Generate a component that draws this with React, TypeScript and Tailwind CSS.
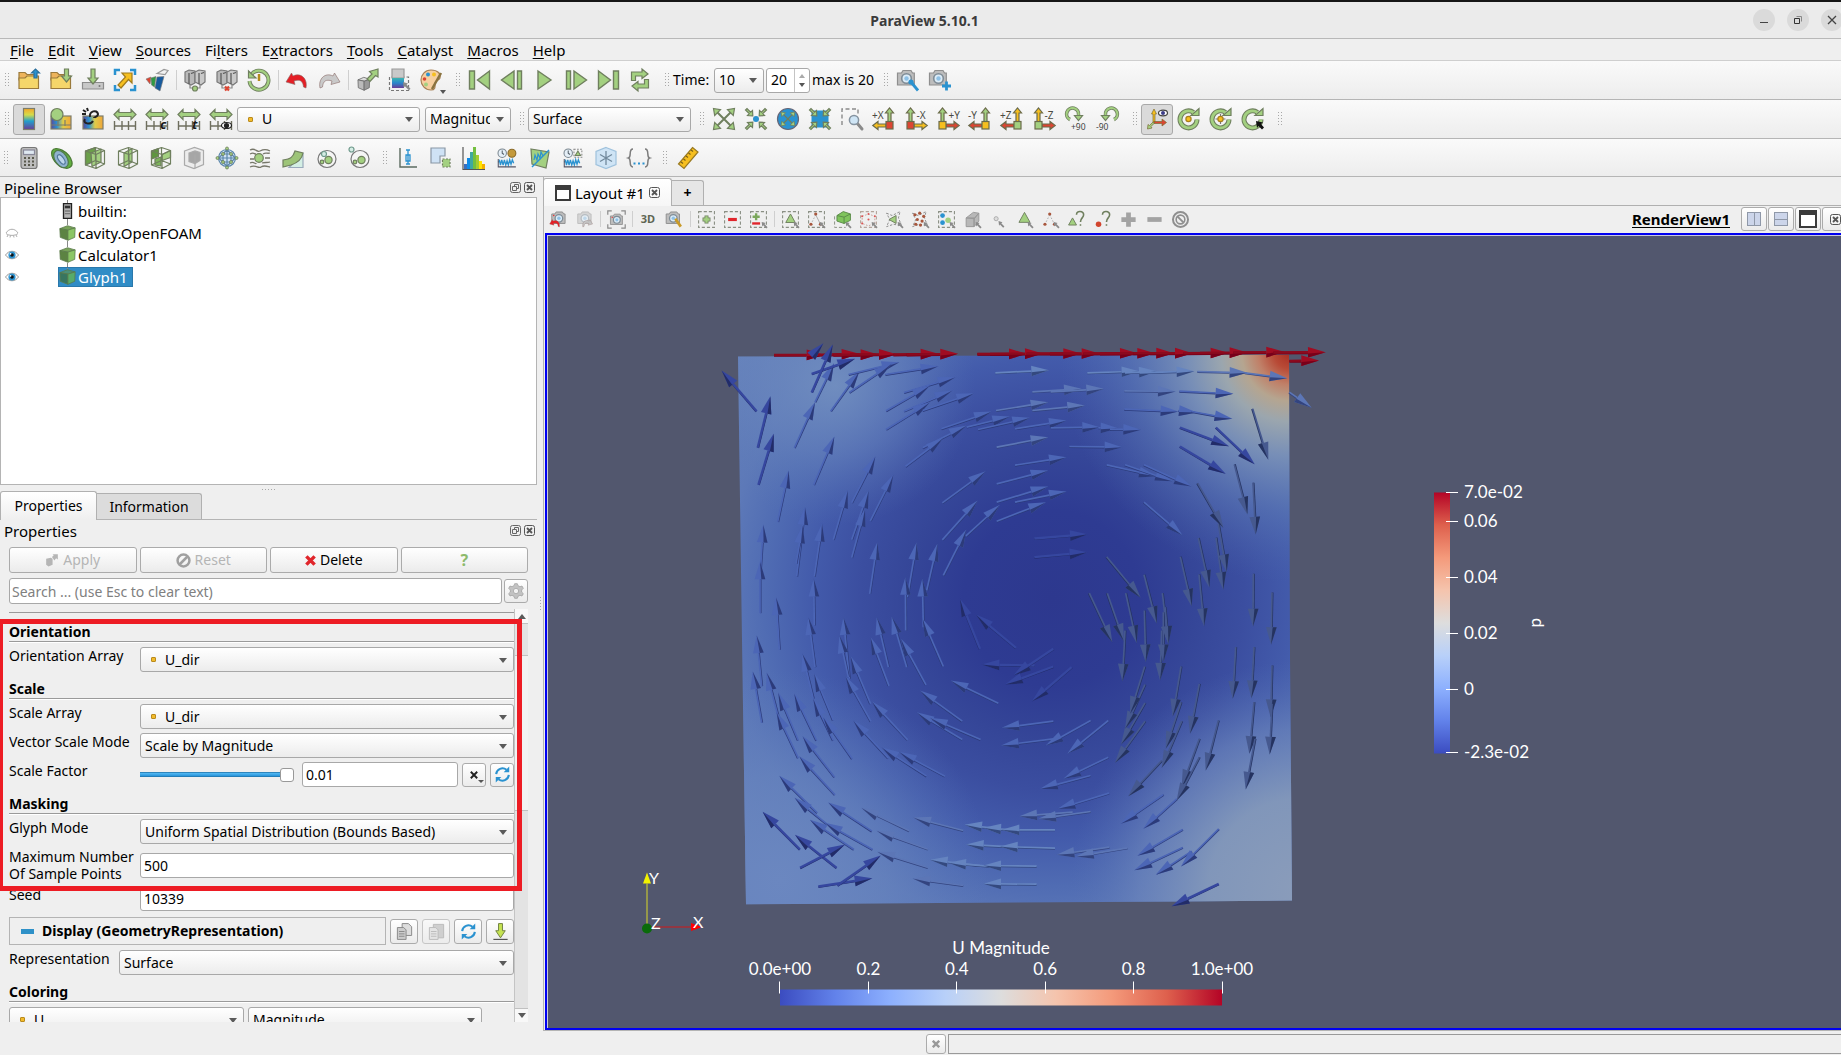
import React, { useId } from "react";

type Kids = { children?: React.ReactNode };

const G = "#a3d080";
const GS = "#6f7f5e";
const B = "#2a92d0";
const Y = "#f6bf1f";
const R = "#dc4532";

/* ---------- icon primitives ---------- */

function Ico({ s = 24, children }: Kids & { s?: 24 | 18 }) {
  return (
    <svg viewBox="0 0 24 24" className={s === 24 ? "size-6 shrink-0 overflow-visible" : "size-[19px] shrink-0"} fill="none" strokeWidth="1.2">
      {children}
    </svg>
  );
}

const Folder = ({ children }: Kids) => (
  <Ico>
    <path d="M2 7V4.500h6l2 2h9V12H2z" fill="#eeb45c" stroke="#9a7a3c" />
    <path d="M2 20.500V10h6l2-2h11.500V20.500z" fill="#f5d66a" stroke="#9a7a3c" />
    {children}
  </Ico>
);
const DownArrow = ({ x = 12, y = 2, h = 13 }: { x?: number; y?: number; h?: number }) => (
  <path d={`M${x - 2} ${y}h4v${h - 6}h3l-5 6-5-6h3z`} fill={G} stroke={GS} />
);
const Server = ({ children }: Kids) => (
  <Ico>
    <path d="M2 4l4-2 6 1v12l-4 2-6-3z" fill="#b9b9b9" stroke="#777" />
    <path d="M12 4l4-2 6 1v11l-4 3-6-3z" fill="#c9c9c9" stroke="#777" />
    <path d="M6 5v11M16 5v11M8 5.500l3-1M18 5.500l3-1" stroke="#555" />
    <path d="M7 17v3h10v-3" stroke="#888" />
    {children}
  </Ico>
);
const Cube3 = ({ front = G, top = "#c3dfaa", side = "#7da95c", stroke = GS }: { front?: string; top?: string; side?: string; stroke?: string }) => (
  <g stroke={stroke} strokeLinejoin="round">
    <path d="M3 6l9-4 9 3-8 3z" fill={top} />
    <path d="M3 6l9.500 2v14L3.500 18z" fill={side} />
    <path d="M12.500 8l8.500-3-.5 13-8 4z" fill={front} />
  </g>
);
const Camera = ({ red = false, faded = false }: { red?: boolean; faded?: boolean }) => (
  <g opacity={faded ? 0.5 : 1}>
    <path d="M1.500 5h4l1.500-2.500h8L16.500 5h1.800v12H1.500z" fill="#bdbdbd" stroke="#8e8e8e" />
    <circle cx="10.500" cy="10.500" r="4.800" fill="#dcecf7" stroke="#7f8c96" strokeWidth="1.600" />
    <circle cx="10.500" cy="10.500" r="2.200" fill="#8fc1e6" />
    {red && <circle cx="4" cy="7" r="1" fill="#e33" />}
  </g>
);
const Dashed = ({ c = "#8a8f84" }: { c?: string }) => <rect x="2" y="2" width="20" height="20" stroke={c} strokeDasharray="4 2.500" strokeWidth="1.400" />;
const Pick = ({ x = 16, y = 15 }: { x?: number; y?: number }) => (
  <path d={`M${x} ${y}l5 1.500-1.500 1.200 4 4-1.600 1.600-4-4-1.200 1.500z`} fill="#8a8a8a" />
);
const Ruler3 = () => <path d="M1.500 14v9M9 14v9M15.500 14v9M22.500 14v9M1.500 19h21" stroke="#6f6f5f" strokeWidth="1.400" />;
const HArrow = () => <path d="M1 7.500l5-5v3h12v-3l5 5-5 5v-3H6v3z" fill={G} stroke={GS} />;
const Lens = ({ x = 14, y = 13 }: { x?: number; y?: number }) => (
  <g>
    <path d={`M${x + 3} ${y + 3}l5 6`} stroke="#8a8a8a" strokeWidth="3" strokeLinecap="round" />
    <circle cx={x} cy={y} r="4.600" fill="#cfe5f5" stroke="#8593a0" strokeWidth="1.500" />
  </g>
);
const Rainbow = ({ id, x, y, w, h, v = false }: { id: string; x: number; y: number; w: number; h: number; v?: boolean }) => (
  <g>
    <linearGradient id={id} x1="0" y1="0" x2={v ? 0 : 1} y2={v ? 1 : 0}>
      <stop offset="0" stopColor={v ? "#f4a62a" : "#59489c"} />
      <stop offset=".3" stopColor={v ? "#d5dc4a" : "#2a92d0"} />
      <stop offset=".6" stopColor={v ? "#22a0cc" : "#e0cc48"} />
      <stop offset="1" stopColor={v ? "#6a3d96" : "#f0a63a"} />
    </linearGradient>
    <rect x={x} y={y} width={w} height={h} fill={`url(#${id})`} stroke="#7d7d6a" />
  </g>
);
const Axis = ({ label, flip, up, side, box }: { label: string; flip?: boolean; up: string; side: string; box: string }) => (
  <Ico>
    <g transform={flip ? "translate(24 0) scale(-1 1)" : undefined} stroke="#6b6b4a">
      <path d="M16 16V6h-2.500L17.500 1l4 5H19v10z" fill={up} />
      <path d="M14 17H6v-2.500L.8 18.500 6 22.500V20h8z" fill={side} />
      <rect x="14" y="14.500" width="7" height="7.500" fill={box} />
    </g>
    <text x={flip ? 12.500 : 0} y="12" fontSize="10" fill="#4a4a42" fontFamily="Noto Sans">
      {label}
    </text>
  </Ico>
);
const Ring = ({ children }: Kids) => (
  <Ico>
    <g transform="translate(.5 0)">
      <path d="M19.500 12.500a8.500 8.500 0 1 1-3.500-7" stroke={GS} strokeWidth="5" />
      <path d="M13.500 8.500h8V1.500z" fill={G} stroke={GS} />
      <path d="M19.500 12.500a8.500 8.500 0 1 1-3.500-7" stroke={G} strokeWidth="2.800" />
    </g>
    {children}
  </Ico>
);
const Diag = ({ inward }: { inward?: boolean }) => (
  <g fill={G} stroke={GS}>
    {!inward && <path d="M4 4l16 16M20 4L4 20" strokeWidth="2" />}
    {[0, 90, 180, 270].map((a) => (
      <path
        key={a}
        transform={`rotate(${a} 12 12)`}
        d={inward ? "M8.800 8.800L3.500 8.500 5.200 6.600 1.500 3 3 1.500 6.600 5.200 8.500 3.500z" : "M1.500 1.500l7 1.200-5.800 5.800z"}
      />
    ))}
  </g>
);
const Play = ({ flip, bar }: { flip?: boolean; bar?: "thick" | "end" }) => (
  <Ico>
    <g transform={flip ? "translate(24 0) scale(-1 1)" : undefined} fill={G} stroke={GS} strokeWidth="1.400">
      {!bar && <path d="M6 3l13 9-13 9z" />}
      {bar === "thick" && <path d="M10 3l12.500 9L10 21zM2.500 3h4v18h-4z" />}
      {bar === "end" && <path d="M2.500 3l12 9-12 9zM17.500 3h5v18h-5z" />}
    </g>
  </Ico>
);
const WireCube = ({ inner }: { inner?: React.ReactNode }) => (
  <Ico>
    <g stroke={GS} strokeLinejoin="round">
      {inner}
      <path d="M2.500 5l10-3.500 9 3-8.500 4zM2.500 5v14L13 22.500l8.500-4.500V4.500M13 8.500v14M12.500 1.500v13M2.500 19l10-4.500 9 3.500" />
    </g>
  </Ico>
);
const Clock = ({ x, y }: { x: number; y: number }) => (
  <g>
    <circle cx={x} cy={y} r="4.800" fill="#e5eff7" stroke="#7b8790" />
    <path d={`M${x} ${y - 3}v3l2 1.500`} stroke="#55606a" />
  </g>
);
const Wave = ({ y = 17 }: { y?: number }) => (
  <path d={`M2 ${y}l1.500-2 1 5 1.500-6 1.500 6 1.500-6 1.500 6 1.500-5 1.500 5 1.500-6 1.500 5 1.500-5 1.500 4`} stroke={B} strokeWidth="1.500" />
);
const Cycle = () => (
  <Ico s={18}>
    <path d="M4 11.500a8 8 0 0 1 13-5.500M20 12.500a8 8 0 0 1-13 5.500" stroke={B} strokeWidth="2.600" />
    <path d="M13.500 9h7V2zM10.500 15h-7v7z" fill={B} />
  </Ico>
);
const Redo = ({ c }: { c: string }) => (
  <path d="M3 20C1 11 8 4 16 8l1.500-3L23 14l-9 2.500 1-3.500c-6-2-9 0-9.500 6z" fill={c} stroke="#8a6a66" strokeWidth=".6" />
);

/* ---------- widgets ---------- */

function Grip({ first = false, tight = false }: { first?: boolean; tight?: boolean }) {
  return (
    <div className={`flex h-4 shrink-0 justify-end pr-[3px] ${first ? (tight ? "w-3" : "w-[13px]") : tight ? "w-4" : "w-[17px]"}`}>
      <div className="w-[6px] bg-[radial-gradient(circle,#a8a8a8_35%,transparent_40%)] bg-[length:3px_3px]" />
    </div>
  );
}
const Sep = ({ h = "h-5" }: { h?: string }) => (
  <div className="flex w-[6px] shrink-0 justify-center">
    <div className={`w-px bg-[#cfcfcf] ${h}`} />
  </div>
);
function Tool({ label, on, w = "w-8", children }: Kids & { label: string; on?: boolean; w?: string }) {
  return (
    <button
      aria-label={label}
      className={`flex h-[31px] shrink-0 items-center justify-center ${w} ${on ? "rounded-[3px] border border-[#a9a9a9] bg-[#dadada]" : ""}`}
    >
      {children}
    </button>
  );
}
const Caret = () => (
  <span className="pointer-events-none absolute top-1/2 right-[7px] -mt-[2px] border-x-4 border-t-[5px] border-x-transparent border-t-[#5a5a5a]" />
);
function Select({ value, label, id, dot, className }: { value: string; label?: string; id?: string; dot?: boolean; className: string }) {
  return (
    <div className={`relative h-[25px] ${className}`}>
      <select
        id={id}
        aria-label={label}
        className={`h-full w-full appearance-none rounded-[3px] border border-[#a8a8a8] bg-linear-to-b from-white to-[#ececec] pr-5 text-black outline-none ${dot ? "pl-6" : "pl-1"}`}
      >
        <option>{value}</option>
      </select>
      {dot && <span className="pointer-events-none absolute top-[10px] left-[11px] size-[5px] rounded-[1px] border border-[#b98a1c] bg-[#f2bb2c]" />}
      <Caret />
    </div>
  );
}
const FloatClose = () => (
  <div className="flex gap-[3px]">
    <button aria-label="Float">
      <svg viewBox="0 0 11 11" className="size-[11px]" fill="none" stroke="#666">
        <rect x=".5" y=".5" width="10" height="10" rx="2" />
        <path d="M2.500 4.500h4v4h-4zM4.500 4.500v-2h4v4h-2" />
      </svg>
    </button>
    <CloseBox />
  </div>
);
const CloseBox = () => (
  <button aria-label="Close">
    <svg viewBox="0 0 11 11" className="size-[11px]" fill="none" stroke="#555">
      <rect x=".5" y=".5" width="10" height="10" rx="2" />
      <path d="M3 3l5 5M8 3l-5 5" strokeWidth="1.800" />
    </svg>
  </button>
);

/* ---------- title, menu, toolbars ---------- */

const MENUS: [string, string, string][] = [
  ["", "F", "ile"], ["", "E", "dit"], ["", "V", "iew"], ["", "S", "ources"], ["Fi", "l", "ters"],
  ["E", "x", "tractors"], ["", "T", "ools"], ["", "C", "atalyst"], ["", "M", "acros"], ["", "H", "elp"],
];

function TitleBar() {
  const round = "flex size-[22px] items-center justify-center rounded-full bg-[#dadada]";
  return (
    <header className="relative flex h-[39px] shrink-0 items-center justify-center border-t-2 border-b border-t-[#161616] border-b-[#b8b8b8] bg-[#ebebeb]">
      <h1 className="pt-[2px] pl-2 text-sm font-bold text-[#3b3b3b]">ParaView 5.10.1</h1>
      <div className="absolute top-[7px] -right-[2px] flex gap-3">
        <button aria-label="Minimize" className={round}><span className="mt-[5px] h-px w-2 bg-[#444]" /></button>
        <button aria-label="Restore" className={round}>
          <svg viewBox="0 0 10 10" className="size-[10px]" fill="none" stroke="#333"><path d="M1.500 3.500h5v5h-5z" /><path d="M3.500 1.500h5v5" stroke="#888" /></svg>
        </button>
        <button aria-label="Close window" className={round}>
          <svg viewBox="0 0 10 10" className="size-[10px]" stroke="#444" strokeWidth="1.300"><path d="M1 1l8 8M9 1l-8 8" /></svg>
        </button>
      </div>
    </header>
  );
}

const BAR = "flex shrink-0 items-center border-b border-[#b5b5b5] bg-linear-to-b from-[#fafafa] to-[#ededed]";

function MainBar() {
  return (
    <div className={`${BAR} h-[39px]`}>
      <Grip first />
      <Tool label="Open"><Folder><path d="M17 10V5h-2.500L18.500 1l4 4H20v5z" fill={B} stroke="#2b6f9c" /></Folder></Tool>
      <Tool label="Load state"><Folder><DownArrow x={17.500} y={1} h={13} /></Folder></Tool>
      <Tool label="Save data"><Ico><path d="M1.500 14.500h21V21h-21z" fill="#c8c8c8" stroke="#8c8c8c" /><circle cx="18.500" cy="18" r="1" fill="#777" /><DownArrow x={12} y={1} h={15} /></Ico></Tool>
      <Tool label="Save screenshot"><Ico><path d="M2 7V2h5M17 2h5v5M22 17v5h-5M7 22H2v-5" stroke={B} strokeWidth="2.500" /><path d="M9 5h10v10l-3.500-3.500L8 20l-3-3 7.500-8z" fill={Y} stroke="#a07a1c" /></Ico></Tool>
      <Tool label="Save animation"><Ico><path d="M1 11l5-2-1 7z" fill={R} stroke="#777" strokeWidth=".6" /><path d="M6 10l5-1.500-1.500 10.500-3-2z" fill="#2f9a43" stroke="#777" strokeWidth=".6" /><path d="M12 9l7-.5-4 14.500-5-3z" fill="#175b9e" stroke="#777" strokeWidth=".6" /><path d="M12 5.500l7-4 4 1-3 4z" fill="#f2f2f2" stroke="#999" /></Ico></Tool>
      <Sep />
      <Tool label="Connect"><Server><circle cx="12" cy="20.500" r="2.500" fill={G} stroke={GS} /></Server></Tool>
      <Tool label="Disconnect"><Server><path d="M10 18.500l4 4M14 18.500l-4 4" stroke={R} strokeWidth="2.200" /></Server></Tool>
      <Tool label="Reload"><Ico><path d="M4 7a9.500 9.500 0 1 1-1.500 6" stroke={GS} strokeWidth="4" /><path d="M4 7a9.500 9.500 0 1 1-1.500 6" stroke={G} strokeWidth="2.200" /><path d="M1.500 3v7H9z" fill={G} stroke={GS} /><path d="M12 6v7" stroke="#b38c1c" strokeWidth="2.500" /></Ico></Tool>
      <Sep />
      <Tool label="Undo"><Ico><g transform="translate(24 0) scale(-1 1)"><Redo c="#e51f26" /></g></Ico></Tool>
      <Tool label="Redo"><Ico><Redo c="#c9c9c9" /></Ico></Tool>
      <Sep />
      <Tool label="Auto apply"><Ico><g transform="translate(1 8) scale(.65)"><Cube3 front="#999" top="#ddd" side="#bbb" stroke="#666" /></g><path d="M12 11l5-5-2.500-2.500L23 1v8l-2.500-1.500-5.500 6z" fill={G} stroke={GS} /></Ico></Tool>
      <Tool label="Find data"><Ico><path d="M2.500 9v13.500h19V9z" stroke="#777" strokeDasharray="3 2" /><path d="M5 1h12v9H5z" fill="#c9c9c9" stroke="#999" /><linearGradient id="rbA" x2="0" y2="1"><stop stopColor="#3cb4b0" /><stop offset=".5" stopColor="#2a86cc" /><stop offset="1" stopColor="#6a3d96" /></linearGradient><path d="M5 10h12v10H5z" fill="url(#rbA)" /><Pick x={16} y={14} /></Ico></Tool>
      <Tool label="Palette">
        <div className="relative">
          <Ico><path d="M12 2c7 0 10 4 9 8-1 3-5 2-5 5s1 7-4 7C6 22 2 17 2 12S6 2 12 2z" fill="#f6cfa0" stroke="#a88258" /><circle cx="9" cy="6.500" r="2" fill={B} /><circle cx="5.500" cy="11" r="1.800" fill={R} /><circle cx="7" cy="16.500" r="2" fill={G} /><circle cx="15" cy="6.500" r="2" fill={Y} /><path d="M22 5l-9 16" stroke="#8a7340" strokeWidth="2.500" /></Ico>
          <span className="absolute -right-[3px] -bottom-[2px] border-x-[3px] border-t-4 border-x-transparent border-t-[#555]" />
        </div>
      </Tool>
      <Grip />
      <Tool label="First frame"><Play flip bar="end" /></Tool>
      <Tool label="Previous frame"><Play flip bar="thick" /></Tool>
      <Tool label="Play"><Play /></Tool>
      <Tool label="Next frame"><Play bar="thick" /></Tool>
      <Tool label="Last frame"><Play bar="end" /></Tool>
      <Tool label="Loop"><Ico><g fill={G} stroke={GS}><path d="M3.500 12.500V4H14V1l6 5-6 4.500V8H7.500v4.500z" /><path d="M20.500 11.500V20H10v3l-6-5 6-4.500V16h6.500v-4.500z" /></g></Ico></Tool>
      <Grip />
      <label htmlFor="time" className="w-[41px]">Time:</label>
      <Select id="time" value="10" className="w-[50px]" />
      <div className="ml-[2px] flex h-[25px] w-11 rounded-[3px] border border-[#a8a8a8] bg-white">
        <input aria-label="Time step" defaultValue="20" className="w-7 border-r border-[#c4c4c4] pl-1 outline-none" />
        <div className="flex flex-1 flex-col items-center justify-center gap-[5px]">
          <span className="border-x-[3px] border-b-4 border-x-transparent border-b-[#aaa]" />
          <span className="border-x-[3px] border-t-4 border-x-transparent border-t-[#555]" />
        </div>
      </div>
      <span className="ml-[2px] w-[63px] whitespace-nowrap">max is 20</span>
      <Grip />
      <Tool label="Adjust camera"><Ico><Camera /><path d="M15 14l7 8.500" stroke={B} strokeWidth="2.800" /><circle cx="15" cy="14" r="2.600" fill={B} /></Ico></Tool>
      <Tool label="Add camera"><Ico><Camera /><path d="M18.500 13.500v9M14 18h9" stroke={B} strokeWidth="2.800" /></Ico></Tool>
    </div>
  );
}

function ColorBar() {
  return (
    <div className={`${BAR} h-[39px]`}>
      <Grip first />
      <Tool label="Color map legend" on><Ico><Rainbow id="rbB" x={6.500} y={1.500} w={11} h={21} v /></Ico></Tool>
      <Tool label="Edit color map"><Ico><Rainbow id="rbC" x={2} y={9} w={20} h={13} /><path d="M2 18h20M9 13v6M16 13v6" stroke="#7d7d6a" /><circle cx="8" cy="7.500" r="6" fill={G} stroke={GS} /></Ico></Tool>
      <Tool label="Separate color map"><Ico><Rainbow id="rbD" x={2} y={9} w={20} h={13} /><path d="M9 10c-1-6 7-8 8-3 0 3-4 3-4 4M4 12c-3 5 6 6 8 2M2 3l3 2M1 7h4M6 1l1 3" stroke="#222" strokeWidth="2" /></Ico></Tool>
      <Tool label="Rescale range"><Ico><HArrow /><Ruler3 /></Ico></Tool>
      {["c", "t"].map((c) => (
        <Tool key={c} label={`Rescale ${c}`}><Ico><HArrow /><Ruler3 /><text x="15" y="22" fontSize="13" fontWeight="bold" fontStyle="italic" fontFamily="Noto Sans" fill="#1a1a1a">{c}</text></Ico></Tool>
      ))}
      <Tool label="Rescale visible"><Ico><HArrow /><Ruler3 /><ellipse cx="17.500" cy="18.500" rx="5" ry="3" fill="#fff" stroke="#222" /><circle cx="17.500" cy="18.500" r="2.600" fill="#222" /></Ico></Tool>
      <Select label="Color array" value="U" dot className="w-[183px]" />
      <Select label="Component" value="Magnitude" className="ml-[5px] w-[86px]" />
      <Grip />
      <Select label="Representation style" value="Surface" className="w-[163px]" />
      <Grip />
      <Tool label="Reset camera"><Ico><Diag /></Ico></Tool>
      <Tool label="Zoom to data"><Ico><circle cx="12" cy="12" r="3" fill={B} /><Diag inward /></Ico></Tool>
      <Tool label="Reset closest"><Ico><circle cx="12" cy="12" r="10.500" fill={B} stroke="#667" /><g transform="translate(4 4) scale(.66)"><Diag /></g></Ico></Tool>
      <Tool label="Zoom closest"><Ico><rect x="3.500" y="3.500" width="17" height="17" rx="3" fill={B} /><Diag inward /></Ico></Tool>
      <Tool label="Zoom to box"><Ico><path d="M2 18V2h16v5" stroke="#8a8a8a" strokeDasharray="4 2.500" strokeWidth="1.400" /><Lens /></Ico></Tool>
      <Tool label="Positive X"><Axis label="+X" up={G} side={Y} box={R} /></Tool>
      <Tool label="Negative X"><Axis label="-X" flip up={G} side={Y} box={R} /></Tool>
      <Tool label="Positive Y"><Axis label="+Y" flip up={G} side={R} box={Y} /></Tool>
      <Tool label="Negative Y"><Axis label="-Y" up={G} side={R} box={Y} /></Tool>
      <Tool label="Positive Z"><Axis label="+Z" up={Y} side={R} box={G} /></Tool>
      <Tool label="Negative Z"><Axis label="-Z" flip up={Y} side={R} box={G} /></Tool>
      {["+90", "-90"].map((t, i) => (
        <Tool key={t} label={`Rotate ${t}`}>
          <Ico>
            <g transform={i ? "translate(24 0) scale(-1 1)" : undefined}>
              <path d="M6 12.500A6 6 0 1 1 14.500 8" stroke={GS} strokeWidth="3.600" />
              <path d="M6 12.500A6 6 0 1 1 14.500 8" stroke={G} strokeWidth="2" />
              <path d="M10.500 8.500h8l-4 5z" fill={G} stroke={GS} />
            </g>
            <text x={i ? 0 : 7} y="23" fontSize="8.500" fontFamily="Noto Sans" fill="#444">{t}</text>
          </Ico>
        </Tool>
      ))}
      <Grip />
      <Tool label="Show orientation axes" on><Ico><g stroke="#7a6a30" strokeWidth=".7"><path d="M6.500 7L9 2l2.500 5H10v8H8V7z" fill={Y} /><path d="M9 14.500h8V12l4.500 3.500L17 19v-2.500H9z" fill={R} /><path d="M8 15l-3.500 3.500L3 17.500 2.500 22 7 21l-1-1.500L9.500 16z" fill={G} /></g><ellipse cx="18" cy="6" rx="4.500" ry="2.800" fill="#fff" stroke="#444" /><circle cx="18" cy="6" r="2" fill="#3c3c88" /></Ico></Tool>
      <Tool label="Show center"><Ring><circle cx="11.500" cy="12" r="2.600" fill={Y} stroke="#a77f1c" /></Ring></Tool>
      <Tool label="Reset center"><Ring><path d="M11.500 7v10M6.500 12h10" stroke="#777" /><circle cx="11.500" cy="12" r="2.600" fill={Y} stroke="#a77f1c" /></Ring></Tool>
      <Tool label="Pick center"><Ring><path d="M15 14l7 1.500-2 1.500 3 3.500-2 2-3.500-3.500-1.500 2z" fill="#111" /></Ring></Tool>
      <Grip />
    </div>
  );
}

function FilterBar() {
  const w = "w-[33px]";
  const orb = (big: boolean) => (
    <Ico>
      <ellipse cx="13" cy="13" rx="9" ry="8.500" fill="#f5f5f5" stroke="#777" />
      <circle cx={big ? 4.500 : 10} cy={big ? 3.500 : 8} r="2.500" fill="#d5ece4" stroke="#6f9a8c" />
      <circle cx="14.500" cy="14" r="3.600" fill={G} stroke={GS} />
      <circle cx="8" cy="16" r="1.800" fill={G} stroke={GS} />
    </Ico>
  );
  return (
    <div className={`${BAR} h-[38px]`}>
      <Grip first tight />
      <Tool w={w} label="Calculator"><Ico><rect x="4" y="1.500" width="16" height="21" rx="2.500" fill="#bcbcbc" stroke="#777" /><rect x="6.500" y="4" width="11" height="4.500" fill="#dfe9f2" stroke="#889" /><path d="M7 12h2M11 12h2M15 12h2M7 15.500h2M11 15.500h2M15 15.500h2M7 19h2M11 19h2M15 19h2" stroke="#5a5a4e" strokeWidth="2" /></Ico></Tool>
      <Tool w={w} label="Contour"><Ico><path d="M2 5C5-1 19 5 22 16c1 5-4 7-7 6C7 21 0 11 2 5z" fill="#62b040" stroke="#4a7a34" /><ellipse cx="11" cy="13" rx="6" ry="9.500" transform="rotate(-35 11 13)" fill="#8fb2ce" stroke="#4f7a4a" /><ellipse cx="11" cy="13.500" rx="2.500" ry="5.500" transform="rotate(-35 11 13)" fill="#bcd6ea" stroke="#53789c" /></Ico></Tool>
      <Tool w={w} label="Clip"><WireCube inner={<><path d="M2.500 5l10-3.500v13l-10 4.500z" fill="#6ba04a" /><path d="M8 7l10-4v13l-9 4.500z" fill={G} /></>} /></Tool>
      <Tool w={w} label="Slice"><WireCube inner={<path d="M8 7l8-4.500v13.500l-8 4.500z" fill={G} />} /></Tool>
      <Tool w={w} label="Threshold"><WireCube inner={<><path d="M2.500 5l7-2.500v8l-7 2.500z" fill="#5f9640" /><path d="M13 8.500l8.500-4v7l-8.500 3z" fill={G} /><path d="M6 13l6-2v9l-6-1z" fill="#7db55b" /></>} /></Tool>
      <Tool w={w} label="Extract subset"><Ico><g stroke="#aaa"><path d="M2.500 5l10-3.500 9 3v14L12 22.500 2.500 19z" fill="#ececec" /><path d="M7 7l6-2 5 1.500v8l-5 3-6-2z" fill="#a6a6a6" /><path d="M13 8.500v14" /></g></Ico></Tool>
      <Tool w={w} label="Glyph"><Ico><circle cx="12" cy="12" r="8.500" fill="#cfe2f5" stroke="#5b86aa" /><path d="M3.500 12h17M12 3.500v17M8 8h8v8H8zM3.500 12L8 8l4-4.500L16 8l4.500 4-4.500 4-4 4.500L8 16z" stroke="#5b86aa" /><g fill={G} stroke={GS} strokeWidth=".8">{[[12, 2.500], [21.500, 12], [12, 21.500], [2.500, 12], [8, 8], [16, 8], [8, 16], [16, 16]].map(([x, y]) => <circle key={`${x}-${y}`} cx={x} cy={y} r="1.500" />)}</g></Ico></Tool>
      <Tool w={w} label="Stream tracer"><Ico><g stroke="#77776a" strokeWidth="1.300"><path d="M2 4c6-3 6 3 10 1s6-2 10 0M2 8c4-2 4 0 6 0M15 8c3-2 4 0 7-1M2 13h4M17 12h5M2 17c4-2 6 2 6 0M14 17c3-1 5 0 8-1M2 21c6-3 8 2 11 0s5-1 9 0" /></g><circle cx="11" cy="12" r="4.300" fill={G} stroke={GS} /></Ico></Tool>
      <Tool w={w} label="Warp"><Ico><path d="M8 21.500h14V8z" fill="#d4efe4" stroke="#9ab" /><path d="M2 14c8-1 10-3 12-9l8 2c-1 6-6 10-12 12L2 21z" fill="#9dc478" stroke={GS} /></Ico></Tool>
      <Tool w={w} label="Group">{orb(false)}</Tool>
      <Tool w={w} label="Extract group">{orb(true)}</Tool>
      <Grip tight />
      <Tool w={w} label="Plot over line"><Ico><path d="M4 2v19h17" stroke="#5b6b60" strokeWidth="1.400" /><path d="M12 4v14M10 9h4v6h-4zM10 4h4M10 18h4" stroke={B} strokeWidth="1.300" /></Ico></Tool>
      <Tool w={w} label="Plot selection"><Ico><path d="M2 2h14v8h-5v7H2z" fill="#cfe2f5" stroke="#8a97a5" /><path d="M13.500 13h7.500v8h-7.500z" fill={G} stroke={GS} strokeDasharray="2 1.500" /></Ico></Tool>
      <Tool w={w} label="Histogram"><Ico><path d="M2 18h3v5H2z" fill="#3a6fc0" /><path d="M5 12h3v11H5z" fill="#0d8be8" /><path d="M8 6h3v17H8z" fill="#3fa8a0" /><path d="M11 1h3v22h-3z" fill="#73bf3e" /><path d="M14 9h3v14h-3z" fill="#a5cc30" /><path d="M17 15h3v8h-3z" fill="#ffe400" /><path d="M20 18h3v5h-3z" fill="#f5b000" /><path d="M1 1v22.500h22" stroke="#555" /></Ico></Tool>
      <Tool w={w} label="Plot over time"><Ico><g transform="translate(1.500 1.500) scale(.88)"><Clock x={6.500} y={6.500} /><ellipse cx="17.500" cy="6.500" rx="4.500" ry="4.500" fill="#c49a3c" stroke="#8a6a28" /><Wave /><path d="M2 13v9h20" stroke="#556" /></g></Ico></Tool>
      <Tool w={w} label="Probe"><Ico><path d="M3 3l18 3-3 16-14-4z" fill={G} stroke={GS} /><path d="M4 21L21 4" stroke={B} strokeWidth="1.500" /><path d="M6 14l1-5 2 5 1-6 2 4 1-6 2 4" stroke={B} /></Ico></Tool>
      <Tool w={w} label="Selection over time"><Ico><g transform="translate(1.500 1.500) scale(.88)"><Clock x={6.500} y={6.500} /><rect x="13" y="2" width="9" height="9" stroke="#888" strokeDasharray="2 1.500" /><path d="M17.500 4l3 5h-6z" fill={G} stroke={GS} /><Wave /><path d="M2 13v9h20" stroke="#556" /></g></Ico></Tool>
      <Tool w={w} label="Temporal"><Ico><path d="M12 1.500l10 4v13l-10 4-10-4v-13z" fill="#cfe4f5" stroke="#9fc2dd" /><path d="M12 5v14M6 8.500l12 7M18 8.500l-12 7" stroke="#71899c" strokeWidth="1.300" /></Ico></Tool>
      <Tool w={w} label="Programmable filter"><Ico><path d="M6 3c-5 0-1 8-4.500 9 3.500 1-.5 9 4.500 9M18 3c5 0 1 8 4.500 9-3.500 1 .5 9-4.500 9" stroke="#7c7c7c" strokeWidth="1.500" /><path d="M6.500 17.500h2M11 17.500h2M15.500 17.500h2" stroke={B} strokeWidth="2.200" /></Ico></Tool>
      <Grip tight />
      <Tool w={w} label="Ruler"><Ico><path d="M16.500 1.500L22 6 8 22.500 2.500 18z" fill={Y} stroke="#9a7a22" /><path d="M15 4l2 1.500M12.500 7l2 1.500M10 10l2 1.500M7.500 13l2 1.500M5 16l2 1.500" stroke="#7a6018" /></Ico></Tool>
    </div>
  );
}

/* ---------- left dock ---------- */

const Eye = ({ open }: { open: boolean }) =>
  open ? (
    <svg viewBox="0 0 14 12" className="h-3 w-[14px]">
      <path d="M.5 6C4 1 10 1 13.500 6 10 11 4 11 .5 6z" fill="#fff" stroke="#999" />
      <circle cx="7" cy="6" r="3.600" fill="#2a92d0" />
      <circle cx="7" cy="6" r="1.800" fill="#111" />
      <circle cx="5.500" cy="4.800" r=".9" fill="#fff" />
    </svg>
  ) : (
    <svg viewBox="0 0 14 12" className="h-3 w-[14px]" fill="none" stroke="#999">
      <path d="M1 6c3-5 9-5 12 0M1 6.500c3 2.500 9 2.500 12 0M3 8l-1 2M5.500 8.500l-.5 2M8.500 8.500l.5 2M11 8l1 2" strokeWidth=".8" />
    </svg>
  );

const PIPE: { name: string; eye?: boolean; sel?: boolean; server?: boolean }[] = [
  { name: "builtin:", server: true },
  { name: "cavity.OpenFOAM", eye: false },
  { name: "Calculator1", eye: true },
  { name: "Glyph1", eye: true, sel: true },
];

function PipelineBrowser() {
  return (
    <section>
      <div className="flex h-5 items-center justify-between pt-px pr-[2px] pl-1">
        <h2 className="text-[15px]">Pipeline Browser</h2>
        <FloatClose />
      </div>
      <ul className="h-[288px] border border-[#b4b4b4] bg-white pt-[2px]">
        {PIPE.map((p) => (
          <li key={p.name} className="flex h-[22px] items-center pl-1 text-[15px]">
            <span className="w-[54px]">{p.eye !== undefined && <Eye open={p.eye} />}</span>
            <span className={`flex h-[18px] items-center gap-[2px] pr-1 ${p.sel ? "bg-[#308cc6] text-white outline outline-[#2a78ab]" : ""}`}>
              <span className="flex h-[22px] w-[17px] flex-col items-center">
                <i className="h-[3px] w-px bg-[#888]" />
                {p.server ? (
                  <svg viewBox="0 0 24 24" className="h-4 w-[17px]"><path d="M6 1h12v22H6z" fill="#b5b5b5" stroke="#222" strokeWidth="2" /><path d="M8 4h8v4H8z" fill="#333" /><path d="M8 12h8M8 16h8" stroke="#777" strokeWidth="2" /></svg>
                ) : (
                  <svg viewBox="2 1 20 22" className="h-4 w-[17px]" preserveAspectRatio="none"><Cube3 front={p.sel ? "#57ab6a" : "#8cc665"} top={p.sel ? "#4b8f78" : "#79a35a"} side={p.sel ? "#38755f" : "#5c8342"} stroke="#5a7a4a" /></svg>
                )}
                {!p.sel && <i className="h-[3px] w-px bg-[#888]" />}
              </span>
              {p.name}
            </span>
          </li>
        ))}
      </ul>
    </section>
  );
}

const Heading = ({ children }: Kids) => (
  <h3 className="mt-[3px] mb-[1px] h-5 border-b border-[#9a9a9a] leading-[19px] font-bold shadow-[0_1px_0_#fff]">{children}</h3>
);
function Row({ label, children, wide = true }: Kids & { label: string; wide?: boolean }) {
  const id = useId();
  const child = React.isValidElement(children) ? React.cloneElement(children as React.ReactElement<{ id?: string }>, { id }) : children;
  return (
    <div className="flex items-center">
      <label htmlFor={id} className={`shrink-0 self-start leading-[17px] ${wide ? "w-[131px]" : "w-[110px]"}`}>{label}</label>
      {child}
    </div>
  );
}
const Field = ({ id, value, className = "w-full" }: { id?: string; value: string; className?: string }) => (
  <input id={id} defaultValue={value} className={`h-[25px] min-w-0 rounded-[3px] border border-[#a8a8a8] bg-white px-[3px] outline-none ${className}`} />
);
const btn = "flex items-center justify-center rounded-[3px] border border-[#ababab] bg-linear-to-b from-white to-[#ebebeb]";

function ScaleFactor({ id }: { id?: string }) {
  return (
    <div className="flex min-w-0 flex-1 items-center">
      <input
        type="range"
        aria-label="Scale factor slider"
        defaultValue={100}
        className="h-[15px] w-[154px] shrink-0 appearance-none bg-[linear-gradient(#1d6fa5,#4db4f0_30%,#2f9ade_70%,#1d6fa5)] bg-[length:100%_5px] bg-center bg-no-repeat [&::-webkit-slider-thumb]:size-[14px] [&::-webkit-slider-thumb]:appearance-none [&::-webkit-slider-thumb]:rounded-[3px] [&::-webkit-slider-thumb]:border [&::-webkit-slider-thumb]:border-[#999] [&::-webkit-slider-thumb]:bg-white"
      />
      <Field id={id} value="0.01" className="ml-2 flex-1" />
      <button aria-label="Scale options" className={`${btn} relative ml-1 h-6 w-6 shrink-0`}>
        <svg viewBox="0 0 10 10" className="size-2" stroke="#222" strokeWidth="2.400"><path d="M1 1l8 8M9 1l-8 8" /></svg>
        <span className="absolute right-[1px] bottom-[3px] border-x-[3px] border-t-[3px] border-x-transparent border-t-[#555]" />
      </button>
      <button aria-label="Reset scale" className={`${btn} ml-1 h-6 w-6 shrink-0`}><Cycle /></button>
    </div>
  );
}

function PropertiesPanel() {
  return (
    <section className="flex min-h-0 flex-1 flex-col">
      <div role="tablist" className="flex h-[28px] items-end border-b border-[#b4b4b4]">
        <button role="tab" className="-mb-px h-[29px] w-[97px] rounded-t-[3px] border border-b-0 border-[#b0b0b0] bg-linear-to-b from-white to-[#efefef]">Properties</button>
        <button role="tab" className="h-[26px] w-[105px] rounded-tr-[3px] border border-b-0 border-l-0 border-[#b0b0b0] bg-[#dcdcdc]">Information</button>
      </div>
      <div className="flex h-[21px] items-center justify-between pr-[2px] pl-1">
        <h2 className="text-[15px]">Properties</h2>
        <FloatClose />
      </div>
      <div className="mt-[6px] mr-[9px] ml-[9px] grid grid-cols-4 gap-[3px]">
        <button disabled className={`${btn} h-[26px] gap-1 text-[#b5b5b5]`}>
          <svg viewBox="0 0 24 24" className="size-[14px]" fill="#b5b5b5"><path d="M2 10l8-2 3 2v10l-7 3-4-3zM12 7l3-3-2-2h9v9l-3-2-3 4z" /></svg>Apply
        </button>
        <button disabled className={`${btn} h-[26px] gap-1 text-[#b5b5b5]`}>
          <svg viewBox="0 0 24 24" className="size-[15px]" fill="none" stroke="#a0a0a0" strokeWidth="4"><circle cx="12" cy="12" r="9.500" /><path d="M18 6L6 18" /></svg>Reset
        </button>
        <button className={`${btn} h-[26px] gap-1`}>
          <svg viewBox="0 0 12 12" className="size-[11px]" stroke="#e0252b" strokeWidth="3.800"><path d="M1.500 1.500l9 9M10.500 1.500l-9 9" /></svg>Delete
        </button>
        <button className={`${btn} h-[26px] text-base font-bold text-[#8dba6c]`}>?</button>
      </div>
      <div className="mt-[5px] mr-[9px] ml-[9px] flex items-center gap-[2px]">
        <input aria-label="Search" placeholder="Search ... (use Esc to clear text)" className="h-[26px] min-w-0 flex-1 rounded-[3px] border border-[#a8a8a8] bg-white px-[2px] outline-none placeholder:text-[#808080]" />
        <button aria-label="Advanced" className={`${btn} h-6 w-6`}>
          <svg viewBox="0 0 24 24" className="size-4" fill="#c2c2c2" stroke="#999"><path d="M10 1h4l1 3 3 1.500 3-1 2 3.500-2.500 2.500v3L23 16l-2 3.500-3-1-3 1.500-1 3h-4l-1-3-3-1.500-3 1L1 16l2.500-2.500v-3L1 8l2-3.500 3 1L9 4z" /><circle cx="12" cy="12" r="4" fill="#f2f2f2" /></svg>
        </button>
      </div>
      <div className="relative mt-[5px] flex min-h-0 flex-1 pr-[9px] pl-[9px]">
        <div className="flex min-w-0 flex-1 flex-col gap-1 overflow-hidden pt-[3px]">
          <div className="h-[3px] shrink-0 border-t border-[#9a9a9a]" />
          <Heading>Orientation</Heading>
          <Row label="Orientation Array"><Select value="U_dir" dot className="flex-1" /></Row>
          <Heading>Scale</Heading>
          <Row label="Scale Array"><Select value="U_dir" dot className="flex-1" /></Row>
          <Row label="Vector Scale Mode"><Select value="Scale by Magnitude" className="flex-1" /></Row>
          <Row label="Scale Factor"><ScaleFactor /></Row>
          <Heading>Masking</Heading>
          <Row label="Glyph Mode"><Select value="Uniform Spatial Distribution (Bounds Based)" className="flex-1" /></Row>
          <Row label="Maximum Number Of Sample Points"><Field value="500" /></Row>
          <Row label="Seed"><Field value="10339" /></Row>
          <div className="mt-[2px] mb-[1px] flex items-center gap-1">
            <button className="flex h-7 flex-1 items-center gap-2 border border-[#b4b4b4] pl-[11px] font-bold">
              <span className="h-[5px] w-[13px] bg-[#2f91c8]" />Display (GeometryRepresentation)
            </button>
            <button aria-label="Copy" className={`${btn} h-[25px] w-7`}><Ico s={18}><path d="M9 2h8l4 4v11H9z" fill="#ddd" stroke="#888" /><path d="M3 7h8l3 3v12H3z" fill="#ccc" stroke="#888" /><path d="M5 12h7M5 15h7M5 18h7" stroke="#888" /></Ico></button>
            <button aria-label="Paste" className={`${btn} h-[25px] w-7 opacity-60`}><Ico s={18}><path d="M8 3h13v17H8z" fill="#bbb" stroke="#999" /><path d="M3 7h8l3 3v12H3z" fill="#ddd" stroke="#999" /><path d="M5 12h7M5 15h7M5 18h7" stroke="#999" /></Ico></button>
            <button aria-label="Restore defaults" className={`${btn} h-[25px] w-7`}><Cycle /></button>
            <button aria-label="Save defaults" className={`${btn} h-[25px] w-7`}><Ico s={18}><path d="M9.500 2h5v9h3.500l-6 9-6-9h3.500z" fill="#c5e352" stroke="#6f7f3e" /><path d="M3 22h18" stroke="#555" strokeWidth="1.500" /></Ico></button>
          </div>
          <Row label="Representation" wide={false}><Select value="Surface" className="flex-1" /></Row>
          <Heading>Coloring</Heading>
          <div className="flex gap-1">
            <Select label="Coloring array" value="U" dot className="w-[235px] shrink-0" />
            <Select label="Coloring component" value="Magnitude" className="w-[234px] shrink-0" />
          </div>
        </div>
        <div className="flex w-[14px] shrink-0 flex-col border-l border-[#c4c4c4] bg-[#e3e3e3]">
          <span className="flex h-[14px] items-center justify-center bg-[#f8f8f8]"><i className="border-x-4 border-b-[5px] border-x-transparent border-b-[#5a5a5a]" /></span>
          <span className="h-[33px] border-y border-[#c0c0c0] bg-[#e3e3e3]" />
          <span className="h-[155px] border-b border-[#c0c0c0] bg-[#f2f2f2]" />
          <span className="flex-1" />
          <span className="flex h-[14px] items-center justify-center border-t border-[#c0c0c0] bg-[#f8f8f8]"><i className="border-x-4 border-t-[5px] border-x-transparent border-t-[#5a5a5a]" /></span>
        </div>
        <div className="pointer-events-none absolute top-[10px] right-[15px] -left-[2px] h-[272px] border-[5px] border-[#ed1c24]" />
      </div>
    </section>
  );
}

/* ---------- render view ---------- */

/* Each entry is [tail x, tail y, tip x, tip y, tone?]; tones index TONES. */
type Arrow = [number, number, number, number, number?];
const TONES = [
  ["#4c66b6", "#4058a8", "#2c3b7a"],
  ["#36479f", "#2f3e92", "#222c68"],
  ["#6584c0", "#5874b4", "#34497f"],
  ["#a00c22", "#8c0a1e", "#78001a"],
  ["#46598f", "#40558c", "#253360"],
  ["#5c76b6", "#4c66ac", "#33447f"],
];

const NW: Arrow[] = [
  [170, 242, 65, 120, 1], [173, 352, 211, 197, 1], [175, 463, 221, 310, 1], [283, 352, 345, 215], [345, 215, 402, 98], [340, 70, 370, 38, 1],
  [335, 130, 465, 85, 1], [335, 186, 398, 42, 1], [392, 242, 478, 122], [446, 132, 598, 95], [448, 186, 575, 100], [556, 132, 715, 107],
  [612, 186, 766, 140], [558, 241, 690, 165], [612, 242, 757, 180], [558, 297, 690, 215], [668, 240, 822, 188], [724, 295, 875, 243],
  [668, 352, 800, 285], [616, 408, 730, 322], [800, 290, 930, 258], [834, 297, 990, 262], [341, 463, 403, 318], [233, 574, 266, 420],
  [455, 517, 526, 378], [511, 571, 580, 433], [400, 628, 443, 480], [455, 628, 506, 480], [455, 682, 495, 535], [290, 738, 315, 530],
  [288, 700, 308, 585], [343, 738, 366, 580], [180, 740, 190, 583], [180, 848, 180, 693], [509, 790, 532, 635], [622, 800, 650, 635],
  [617, 900, 616, 740], [680, 780, 712, 640], [670, 890, 667, 745], [727, 517, 857, 422], [727, 628, 833, 510], [797, 617, 900, 523],
  [730, 735, 799, 597], [343, 885, 341, 745], [238, 958, 228, 800], [886, 127, 1047, 119, 2], [888, 240, 1045, 215, 5], [890, 350, 1045, 320, 5],
  [890, 460, 1045, 420], [890, 515, 1045, 468], [890, 572, 1038, 515], [945, 295, 1100, 270], [945, 404, 1100, 380], [945, 515, 1100, 483],
];
const NE: Arrow[] = [
  [232, 127, 388, 122, 2], [345, 127, 440, 122, 2], [390, 127, 553, 122, 2], [562, 123, 712, 127, 5], [705, 127, 832, 143, 5], [67, 184, 215, 175, 5],
  [122, 184, 282, 175, 5], [343, 181, 497, 183, 5], [508, 182, 670, 190], [67, 240, 225, 225, 5], [343, 236, 505, 243], [505, 240, 560, 246],
  [545, 243, 667, 265], [838, 185, 905, 232, 5], [122, 292, 270, 290], [265, 292, 325, 293], [300, 296, 393, 298], [178, 348, 337, 350],
  [510, 291, 657, 347, 1], [618, 291, 734, 401, 1], [728, 235, 775, 388, 4], [510, 348, 647, 430, 1], [673, 402, 712, 552, 4], [729, 457, 737, 612, 4],
  [563, 458, 640, 592, 4], [290, 403, 440, 437], [345, 403, 488, 452], [402, 403, 545, 468], [402, 515, 518, 615], [73, 624, 233, 611, 1],
  [73, 680, 232, 665, 1], [290, 679, 392, 802, 4], [511, 679, 545, 828, 4], [565, 623, 598, 772, 4], [618, 622, 640, 778, 4], [625, 580, 650, 725, 4],
  [730, 730, 729, 888, 4], [786, 786, 783, 943, 4], [567, 732, 582, 887, 4], [238, 788, 307, 935, 4], [292, 788, 342, 932, 4], [347, 788, 380, 938, 4],
  [402, 733, 440, 880, 4], [457, 788, 475, 940, 4],
];
const SW: Arrow[] = [
  [185, 227, 170, 75], [185, 337, 158, 183], [235, 320, 200, 187], [295, 390, 235, 247], [295, 443, 230, 305], [350, 390, 283, 250],
  [345, 170, 325, 20], [340, 265, 307, 130], [400, 330, 343, 190], [400, 390, 340, 265], [457, 445, 370, 320], [404, 500, 308, 377],
  [405, 553, 298, 437], [448, 205, 430, 20], [445, 200, 418, 75], [512, 280, 452, 137], [513, 333, 437, 197], [565, 170, 530, 20],
  [567, 226, 512, 80], [620, 170, 575, 18], [678, 223, 603, 85], [730, 168, 668, 25], [623, 388, 516, 273], [565, 443, 460, 330],
  [840, 115, 780, -35, 1], [948, 112, 828, 12, 1], [895, 278, 752, 210], [787, 332, 660, 240], [787, 387, 650, 305], [842, 387, 690, 322],
  [680, 497, 545, 410], [735, 497, 597, 424], [352, 607, 238, 496], [380, 640, 284, 562], [300, 717, 188, 604, 1], [410, 772, 285, 673, 1],
  [300, 772, 435, 702, 1], [355, 828, 517, 803, 1], [412, 825, 542, 735, 1], [462, 717, 330, 628], [516, 662, 385, 576], [518, 717, 375, 637],
  [628, 661, 484, 592, 5], [684, 716, 530, 661, 5], [684, 771, 532, 724, 5], [790, 660, 640, 621, 5], [790, 825, 638, 804, 5], [900, 655, 793, 643, 2],
  [960, 660, 850, 652, 2], [1065, 658, 905, 658, 2], [955, 710, 798, 702, 2], [1065, 713, 900, 708, 2], [840, 765, 690, 748, 2], [900, 770, 745, 757, 2],
  [1010, 767, 850, 765, 2], [1010, 821, 850, 820, 2], [1004, 165, 845, 162, 1], [1060, 332, 905, 352], [1060, 385, 903, 405],
];
const SE: Arrow[] = [
  [130, 115, 10, 195, 1], [130, 168, -15, 222, 1], [185, 170, 65, 273, 1], [242, 330, 107, 405], [295, 330, 172, 430], [295, 440, 160, 505],
  [242, 495, 90, 535], [297, 548, 143, 595], [188, 605, 28, 617, 5], [242, 603, 85, 625, 5], [298, 710, 140, 733, 5], [353, 712, 198, 738, 5],
  [518, 657, 382, 736], [518, 711, 373, 779], [545, 722, 437, 793], [626, 655, 513, 768], [626, 820, 485, 887, 1], [460, 552, 332, 640],
  [455, 450, 355, 557, 4], [500, 565, 400, 655], [405, 332, 315, 457, 4], [405, 277, 333, 402, 4], [405, 222, 345, 355, 4], [404, 168, 360, 310, 4],
  [345, 60, 337, 213, 4], [403, 0, 407, 155, 4], [455, 60, 450, 210, 4], [460, 5, 460, 155, 4], [465, -10, 475, 100, 4], [513, 168, 488, 318, 4],
  [513, 275, 467, 415, 4], [515, 332, 455, 472, 4], [568, 220, 540, 370, 4], [568, 385, 515, 530, 4], [568, 440, 500, 570, 4], [625, 330, 587, 480, 4],
  [677, 110, 668, 265, 4], [732, 110, 724, 263, 4], [786, 165, 782, 320, 4], [786, 280, 779, 432, 4], [732, 275, 718, 430, 4], [735, 385, 707, 537, 4],
];
const LID: Arrow[] = [
  [222, 76, 373, 76], [340, 76, 478, 73], [400, 76, 535, 75], [450, 75, 590, 74], [580, 75, 715, 73], [620, 75, 774, 73], [832, 73, 980, 73], [870, 73, 1028, 72],
  [980, 72, 1143, 72], [1050, 72, 1198, 72], [1150, 72, 1313, 71], [1200, 72, 1365, 71], [1300, 71, 1422, 71], [1350, 71, 1478, 71], [1450, 71, 1585, 70],
  [1500, 70, 1642, 69], [1600, 69, 1752, 67], [1720, 69, 1877, 68], [1768, 94, 1857, 93],
].map(([a, b, c, d]) => [a, b, c, d, 3] as Arrow);

function Arrows({ x, y, data }: { x: number; y: number; data: Arrow[] }) {
  return (
    <g transform={`translate(${x} ${y}) scale(.33333)`}>
      {data.map(([x1, y1, x2, y2, tone = 0], i) => {
        const len = Math.hypot(x2 - x1, y2 - y1);
        const ux = (x2 - x1) / len;
        const uy = (y2 - y1) / len;
        const bx = x2 - ux * 53;
        const by = y2 - uy * 53;
        const w = 16;
        const s = ux + uy * -0.3 >= 0 ? 1 : -1;
        const nx = -uy * w * s;
        const ny = ux * w * s;
        const [light, shaft, dark] = TONES[tone];
        const ox = (nx / w) * 2;
        const oy = (ny / w) * 2;
        return (
          <g key={i}>
            <path d={`M${x1 + ox} ${y1 + oy}L${bx + ox} ${by + oy}`} stroke={dark} strokeWidth={tone === 3 ? 8 : 5} />
            <path d={`M${x1} ${y1}L${bx} ${by}`} stroke={tone === 3 ? shaft : light} strokeWidth={tone === 3 || tone === 1 ? 7 : 5} />
            <path d={`M${x2} ${y2}L${bx - nx} ${by - ny}L${bx + nx} ${by + ny}z`} fill={light} />
            <path d={`M${x2} ${y2}L${bx + nx * 0.25} ${by + ny * 0.25}L${bx + nx} ${by + ny}z`} fill={dark} />
          </g>
        );
      })}
    </g>
  );
}

const COOLWARM: [number, string][] = [
  [0, "#3b4cc0"], [0.125, "#6282ea"], [0.25, "#8db0fe"], [0.375, "#b8d0f9"], [0.5, "#dddddd"], [0.625, "#f5c4ad"], [0.75, "#f49a7b"], [0.875, "#de604d"], [1, "#b40426"],
];
const stops = (list: [number, string, number?][]) => list.map(([o, c, a = 1]) => <stop key={o} offset={o} stopColor={c} stopOpacity={a} />);

function Scene() {
  return (
    <svg viewBox="548 236 1293 791" className="min-h-0 w-full flex-1 bg-[#52576e]" fill="none">
      <defs>
        <radialGradient id="base" gradientUnits="userSpaceOnUse" cx="1052" cy="598" r="400">
          {stops([[0, "#2d388e"], [0.22, "#2e3b92"], [0.36, "#354698"], [0.48, "#3b4ea0"], [0.6, "#435bab"], [0.72, "#506cb3"], [0.82, "#5d79b8"], [1, "#6884bc"]])}
        </radialGradient>
        <radialGradient id="hot" gradientUnits="userSpaceOnUse" cx="1290" cy="352" r="230">
          {stops([[0, "#a82c22"], [0.07, "#b84a36"], [0.14, "#c08068"], [0.21, "#b5a590"], [0.3, "#9ba6ae"], [0.45, "#7c93b8", 0.9], [0.7, "#5f7cb6", 0.5], [1, "#4e69b0", 0]])}
        </radialGradient>
        <radialGradient id="se" gradientUnits="userSpaceOnUse" cx="1300" cy="890" r="230">
          {stops([[0, "#8a9cba"], [0.4, "#8398ba", 0.95], [0.7, "#6f88bc", 0.6], [1, "#5570b4", 0]])}
        </radialGradient>
        <radialGradient id="sw" gradientUnits="userSpaceOnUse" cx="780" cy="880" r="210">
          {stops([[0, "#6b87c0"], [0.5, "#6784be", 0.6], [1, "#5a78ba", 0]])}
        </radialGradient>
        <radialGradient id="nw" gradientUnits="userSpaceOnUse" cx="835" cy="385" r="140">
          {stops([[0, "#7390c0", 0.9], [0.5, "#6b88be", 0.5], [1, "#5a78b6", 0]])}
        </radialGradient>
        <linearGradient id="cwH">{stops(COOLWARM)}</linearGradient>
        <linearGradient id="cwV" x1="0" y1="1" x2="0" y2="0">{stops(COOLWARM)}</linearGradient>
        <clipPath id="cavity"><path d="M738 356L1289 354L1290 655L1292 900L1180 901L860 903L746 904L742 640L740 500z" /></clipPath>
      </defs>
      <g clipPath="url(#cavity)">
        {["url(#base)", "url(#nw)", "url(#sw)", "url(#se)", "url(#hot)"].map((fill) => (
          <rect key={fill} x="730" y="340" width="570" height="570" fill={fill} />
        ))}
      </g>
      <Arrows x={700} y={329} data={LID} />
      <Arrows x={700} y={330} data={NW} />
      <Arrows x={1010} y={330} data={NE} />
      <Arrows x={700} y={610} data={SW} />
      <Arrows x={1010} y={610} data={SE} />

      <g fontFamily="Lato, Liberation Sans, sans-serif" fontSize="17" fill="#fff" stroke="none">
        <rect x="1434" y="492" width="16" height="261" fill="url(#cwV)" />
        {([["7.0e-02", 492], ["0.06", 521], ["0.04", 577], ["0.02", 633], ["0", 689], ["-2.3e-02", 752]] as [string, number][]).map(([t, y]) => (
          <g key={t}>
            <path d={`M1446 ${y}h12`} stroke="#fff" />
            <text x="1464" y={y + 5}>{t}</text>
          </g>
        ))}
        <text transform="translate(1541 627) rotate(-90)">p</text>

        <text x="1001" y="953" textAnchor="middle">U Magnitude</text>
        <rect x="780" y="989" width="442" height="16" fill="url(#cwH)" />
        {["0.0e+00", "0.2", "0.4", "0.6", "0.8", "1.0e+00"].map((t, i) => (
          <g key={t}>
            <path d={`M${779.5 + Math.round(i * 88.500)} 981v12`} stroke="#fff" />
            <text x={780 + i * 88.400} y="974" textAnchor="middle">{t}</text>
          </g>
        ))}

        <path d="M647 926V883" stroke="#d8d828" strokeWidth="1" />
        <path d="M647 872l4 11h-8z" fill="#f2f200" />
        <path d="M647 926.500h46" stroke="#d01818" strokeWidth="1" />
        <path d="M702 926.500l-11-4v8z" fill="#f00" />
        <circle cx="647" cy="928" r="5" fill="#0a6b0a" />
        <text x="649" y="883" fontSize="16">Y</text>
        <text x="651" y="928" fontSize="16">Z</text>
        <text x="693" y="927" fontSize="16">X</text>
      </g>
    </svg>
  );
}

const VT = ({ label, children }: Kids & { label: string }) => (
  <button aria-label={label} className="flex h-6 w-[26px] shrink-0 items-center justify-center">
    <Ico s={18}>{children}</Ico>
  </button>
);
const TRI = (x: number, y: number, r: number) => <path d={`M${x} ${y - r}l${r} ${r * 1.800}h${-2 * r}z`} fill={G} stroke={GS} />;
const Dots = ({ pts, c = "#a8563c", r = 1.600 }: { pts: number[][]; c?: string; r?: number }) => (
  <g fill={c}>{pts.map(([x, y]) => <circle key={`${x}-${y}`} cx={x} cy={y} r={r} />)}</g>
);

function ViewPane() {
  const vbtn = `${btn} h-6 w-[26px] shrink-0`;
  return (
    <section className="flex min-w-0 flex-1 flex-col border-b border-l border-[#b4b4b4]">
      <div className="-ml-px flex h-[29px] items-end border-b border-[#b0b0b0]">
        <div className="-mb-px flex h-[28px] w-[129px] items-center gap-1 rounded-t-[3px] border border-b-0 border-[#b0b0b0] bg-linear-to-b from-white to-[#f6f6f6] pl-[11px]">
          <span className="h-4 w-4 shrink-0 border-2 border-t-[5px] border-[#3a3a3a] bg-white" />
          <span className="text-[15px] whitespace-nowrap">Layout #1</span>
          <CloseBox />
        </div>
        <button aria-label="New layout" className="h-[25px] w-8 rounded-tr-[3px] border border-b-0 border-l-0 border-[#b0b0b0] bg-[#e6e6e6] font-bold">+</button>
      </div>
      <div className="flex h-[27px] items-center pb-px pl-[1px]">
        <VT label="Undo camera"><g transform="translate(2 0)"><Camera red /></g><g transform="translate(15 9) scale(-.62 .62)"><Redo c="#e51f26" /></g></VT>
        <VT label="Redo camera"><g transform="translate(2 0)"><Camera faded /></g><g transform="translate(8 9) scale(.62)"><Redo c="#c4c4c4" /></g></VT>
        <Sep h="h-4" />
        <VT label="Capture"><path d="M1 6V1h5M18 1h5v5M23 18v5h-5M6 23H1v-5" stroke="#8a8a8a" strokeWidth="1.500" /><g transform="translate(3 3) scale(.9)"><Camera red /></g></VT>
        <Sep h="h-4" />
        <button className="w-[26px] shrink-0 text-[11px] font-bold text-[#5f6552]">3D</button>
        <VT label="Camera link"><Camera /><path d="M13 11l7 10" stroke="#c99a28" strokeWidth="3.500" /></VT>
        <Sep h="h-4" />
        <VT label="Add selection"><Dashed /><path d="M12 7v10M7 12h10" stroke={GS} strokeWidth="5" /><path d="M12 8v8M8 12h8" stroke={G} strokeWidth="3" /></VT>
        <VT label="Subtract selection"><Dashed /><path d="M6.500 12h11" stroke="#e0252b" strokeWidth="4" /></VT>
        <VT label="Toggle selection"><Dashed /><path d="M9 4v9M4.500 8.500h9" stroke="#7ba75b" strokeWidth="3" /><path d="M4 17h10" stroke="#e0252b" strokeWidth="3" /><Pick /></VT>
        <Sep h="h-4" />
        <VT label="Select cells"><Dashed />{TRI(12, 11, 6)}<Pick /></VT>
        <VT label="Select points"><Dashed /><path d="M11 6L5 18" stroke="#aaa" strokeDasharray="2 2" /><path d="M11 6l6 12" stroke="#aaa" /><Dots r={2} pts={[[11, 5], [5, 18], [17, 18]]} /><Pick /></VT>
        <VT label="Frustum cells"><path d="M2 8v14h14" stroke="#8a8f84" strokeDasharray="4 2.500" /><path d="M5 7l8-5 9 3v8l-8 4-9-3z" fill="#7fc45c" stroke="#5a8a48" /><path d="M5 7l9 2 8-4M14 9v8" stroke="#5a8a48" /><Pick /></VT>
        <VT label="Frustum points"><Dashed c="#b5a59c" /><path d="M4 8l8-3 8 3v9l-8 3-8-3z" stroke="#c8a098" strokeDasharray="2 2" /><Dots c="#d55" r={1.300} pts={[[4, 8], [12, 5], [20, 8], [12, 12], [4, 17]]} /><Pick /></VT>
        <VT label="Polygon cells"><path d="M2 4l7 3 10-5-2 8 4 10-10-2-9 3 4-9z" stroke="#8a8a8a" strokeDasharray="3 2" /><path d="M5 12l9-5v10z" fill={G} stroke={GS} /><Pick /></VT>
        <VT label="Polygon points"><path d="M2 4l7 3 10-5-2 8 4 10-10-2-9 3 4-9z" stroke="#8a8a8a" strokeDasharray="3 2" /><Dots r={2} pts={[[5, 6], [11, 4], [16, 8], [8, 12], [14, 14], [6, 18], [12, 19]]} /><Pick /></VT>
        <VT label="Select block"><Dashed /><Dots c={B} r={3} pts={[[7, 7], [7, 16]]} /><Dots c={G} r={3.500} pts={[[14, 13]]} /><Pick /></VT>
        <VT label="Block frustum"><path d="M4 10l9-7 7 1-6 7zM4 10h10v11H4zM14 11l6-7v10l-6 7z" fill="#b8b8b8" stroke="#999" /><Pick /></VT>
        <VT label="Hover"><circle cx="9" cy="11" r="2.600" fill="#ddd" stroke="#aaa" /><Pick x={12} y={14} /></VT>
        <VT label="Interactive cells">{TRI(12, 10, 7)}<Pick /></VT>
        <VT label="Interactive points"><path d="M11 6L5 18M11 6l6 12" stroke="#aaa" strokeDasharray="2 2" /><Dots r={2} pts={[[11, 5], [5, 18], [17, 18]]} /><Pick /></VT>
        <VT label="Hover cells">{TRI(7, 15, 5)}<path d="M12 6c0-6 9-5 9 0 0 4-4 4-4 9M17 18v2" stroke={GS} strokeWidth="2" /></VT>
        <VT label="Hover points"><Dots c="#d2452e" r={3.500} pts={[[7, 18]]} /><path d="M12 6c0-6 9-5 9 0 0 4-4 4-4 9M17 18v2" stroke={GS} strokeWidth="2" /></VT>
        <VT label="Grow"><path d="M12 3v18M3 12h18" stroke="#a3a3a3" strokeWidth="6" /></VT>
        <VT label="Shrink"><path d="M3 12h18" stroke="#a3a3a3" strokeWidth="6" /></VT>
        <VT label="Clear"><circle cx="12" cy="12" r="9.500" stroke="#8f8f8f" strokeWidth="2.500" /><circle cx="12" cy="12" r="5.500" stroke="#8f8f8f" strokeWidth="2" /><path d="M8 8l8 8" stroke="#8f8f8f" strokeWidth="2.500" /></VT>
        <span className="flex-1" />
        <a href="#view" className="mr-[11px] text-[15px] font-bold underline underline-offset-2">RenderView1</a>
        <div className="-mr-[7px] flex gap-[1px]">
          <button aria-label="Split horizontal" className={vbtn}><span className="flex h-[14px] w-[14px] border border-[#8f98a8] bg-[#ccd5ea]"><i className="mx-auto w-px bg-[#8f98a8]" /></span></button>
          <button aria-label="Split vertical" className={vbtn}><span className="flex h-[14px] w-[14px] flex-col border border-[#8f98a8] bg-[#ccd5ea]"><i className="my-auto h-px bg-[#8f98a8]" /></span></button>
          <button aria-label="Maximize" className={vbtn}><span className="h-[18px] w-[18px] border-2 border-t-[5px] border-[#3a3a3a] bg-white" /></button>
          <div className={vbtn}><CloseBox /></div>
        </div>
      </div>
      <div id="view" className="ml-[1px] flex min-h-0 flex-1 flex-col border-y-2 border-l-2 border-[#0000f0]">
        <div className="flex min-h-0 flex-1 flex-col border-t border-l border-[#c8c8e0]"><Scene /></div>
      </div>
    </section>
  );
}

export default function App() {
  return (
    <div className="flex h-screen flex-col overflow-hidden bg-[#efefef] font-['Noto_Sans',sans-serif] text-sm leading-[18px] text-black">
      <TitleBar />
      <nav className="flex h-[22px] shrink-0 items-center gap-[14px] border-b border-[#cfcfcf] pl-[10px] text-[15px]">
        {MENUS.map(([a, b, c]) => (
          <button key={a + b + c}>{a}<span className="underline underline-offset-2">{b}</span>{c}</button>
        ))}
      </nav>
      <MainBar />
      <ColorBar />
      <FilterBar />
      <main className="flex min-h-0 flex-1">
        <div className="flex w-[537px] shrink-0 flex-col pb-[9px]">
          <PipelineBrowser />
          <div className="flex h-[7px] items-center justify-center"><div className="h-[2px] w-4 bg-[radial-gradient(circle,#a8a8a8_35%,transparent_40%)] bg-[length:3px_3px]" /></div>
          <PropertiesPanel />
        </div>
        <div className="flex w-[6px] shrink-0 items-center justify-center"><div className="h-4 w-[2px] bg-[radial-gradient(circle,#a8a8a8_35%,transparent_40%)] bg-[length:3px_3px]" /></div>
        <ViewPane />
      </main>
      <footer className="flex h-6 shrink-0 items-center pt-px">
        <div className="flex-1" />
        <button aria-label="Abort" className={`${btn} h-5 w-5`}><svg viewBox="0 0 10 10" className="size-2" stroke="#999" strokeWidth="3"><path d="M1 1l8 8M9 1l-8 8" /></svg></button>
        <div className="ml-[2px] h-5 w-[893px] border border-r-0 border-[#9a9a9a]" />
      </footer>
    </div>
  );
}
